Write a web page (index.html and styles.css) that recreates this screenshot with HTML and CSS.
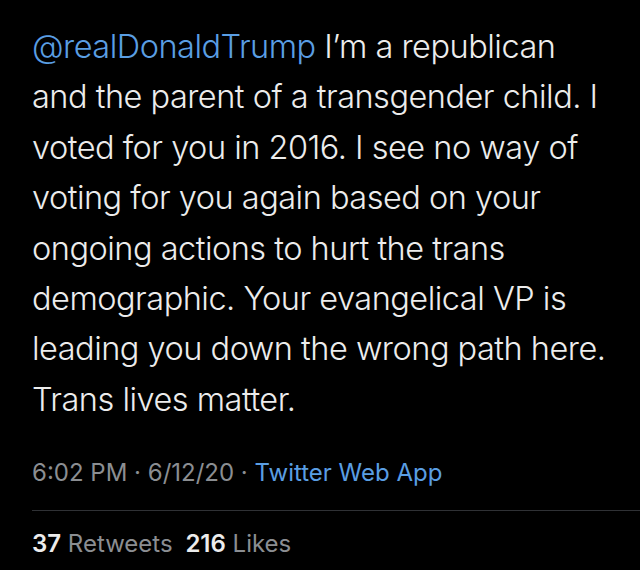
FILE: index.html
```html
<!DOCTYPE html>
<html>
	<head>
		<meta charset="UTF-8">
		<title>Tweet</title>
		<link rel="stylesheet" href="styles.css">
	</head>
	<body>
		<div class="tweet">
			<p class="text">
				<span class="mention">@realDonaldTrump</span> I’m a republican<br>
				and the parent of a transgender child. I<br>
				voted for you in 2016. I see no way of<br>
				voting for you again based on your<br>
				ongoing actions to hurt the trans<br>
				demographic. Your evangelical VP is<br>
				leading you down the wrong path here.<br>
				Trans lives matter.
			</p>
			<div class="meta">
				6:02 PM · 6/12/20 · <span class="source">Twitter Web App</span>
			</div>
			<div class="stats">
				<span class="num">37</span> Retweets <span class="num second">216</span> Likes
			</div>
		</div>
	</body>
</html>
```

FILE: styles.css
```css
html, body{
	margin: 0;
	background-color: #000;
}
.tweet{
	font-family: Inter, "Noto Sans", sans-serif;
	padding: 22px 0 0 32px;
	height: 548px;
}
.text{
	margin: 0;
	color: #ececec;
	font-size: 32.5px;
	line-height: 50.4px;
	letter-spacing: -0.5px;
	font-weight: 300;
}
.mention{
	color: #5a9ee3;
}
.meta{
	margin-top: 33px;
	color: #8b8e92;
	font-size: 24px;
	line-height: 30px;
	padding-bottom: 22px;
	border-bottom: 1px solid #2f3135;
}
.source{
	color: #5a9ee3;
}
.stats{
	color: #8b8e92;
	font-size: 24px;
	line-height: 30px;
	padding-top: 18px;
}
.num{
	color: #ececec;
	font-weight: 600;
}
.second{
	margin-left: 6px;
}
```
